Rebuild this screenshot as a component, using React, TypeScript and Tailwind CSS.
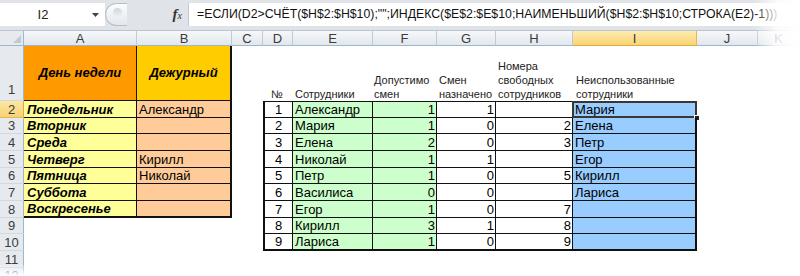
import React from 'react';

const ROW_H = [17, 16, 17, 17, 16, 17, 17, 16, 17, 17, 16]; // rows 2..12

const days = [
  ['Понедельник', 'Александр'],
  ['Вторник', ''],
  ['Среда', ''],
  ['Четверг', 'Кирилл'],
  ['Пятница', 'Николай'],
  ['Суббота', ''],
  ['Воскресенье', ''],
];

const staff = [
  { n: 1, name: 'Александр', max: 1, used: 1, free: '', left: 'Мария' },
  { n: 2, name: 'Мария', max: 1, used: 0, free: '2', left: 'Елена' },
  { n: 3, name: 'Елена', max: 2, used: 0, free: '3', left: 'Петр' },
  { n: 4, name: 'Николай', max: 1, used: 1, free: '', left: 'Егор' },
  { n: 5, name: 'Петр', max: 1, used: 0, free: '5', left: 'Кирилл' },
  { n: 6, name: 'Василиса', max: 0, used: 0, free: '', left: 'Лариса' },
  { n: 7, name: 'Егор', max: 1, used: 0, free: '7', left: '' },
  { n: 8, name: 'Кирилл', max: 3, used: 1, free: '8', left: '' },
  { n: 9, name: 'Лариса', max: 1, used: 0, free: '9', left: '' },
];

const letters = ['A', 'B', 'C', 'D', 'E', 'F', 'G', 'H', 'I', 'J', 'K'];

const formula = '=ЕСЛИ(D2>СЧЁТ($H$2:$H$10);"";ИНДЕКС($E$2:$E$10;НАИМЕНЬШИЙ($H$2:$H$10;СТРОКА(E2)-1)))';

function FormulaBar() {
  return (
    <div className="h-[30px] flex bg-[#e0e4e9] pt-[3px] pb-[4px]">
      <div className="w-[105px] bg-white flex items-center">
        <span className="w-[86px] text-center text-[13px] text-[#222]">I2</span>
        <svg width="7" height="4" viewBox="0 0 7 4" className="ml-[6px]">
          <path d="M0 0 L7 0 L3.5 4 Z" fill="#444" />
        </svg>
      </div>
      <div className="w-[22px] h-[23px] rounded-l-full border border-r-0 border-[#b7bfca] bg-gradient-to-b from-[#fbfcfd] to-[#e4e8ed] flex items-start justify-center pt-[4px] pl-[2px]">
        <div className="w-[9px] h-[9px] rounded-full bg-gradient-to-b from-[#cfd5dc] to-[#eef1f4]" />
      </div>
      <div className="w-[61px] flex items-center justify-end pr-[6px] text-[#333]">
        <span className="font-['Liberation_Serif',serif] italic font-bold text-[15px] leading-none">f</span>
        <span className="font-['Liberation_Serif',serif] italic text-[10px] leading-none mt-[3px]">x</span>
      </div>
      <div className="flex-1 bg-white border-l border-[#c3cad3] flex items-center pl-[8px] text-[12.3px] text-[#111] whitespace-nowrap overflow-hidden">
        {formula}
      </div>
    </div>
  );
}

export default function App() {
  return (
    <div className="relative w-[800px] h-[276px] overflow-hidden bg-white font-['Liberation_Sans',Arial,sans-serif]">
      <FormulaBar />
      <div className="grid grid-cols-[24px_113px_95px_31px_30px_80px_64px_59px_77px_124px_61px_1fr] grid-rows-[15px_55px_17px_16px_17px_17px_16px_17px_17px_16px_17px_17px_16px] border-t border-[#b9c4d0]">
        {/* column headers */}
        <div className="bg-[#e6eaef] border-r border-b border-r-[#9eb6ce] border-b-[#9eb6ce] flex items-end justify-end p-[2px]">
          <svg width="8" height="8" viewBox="0 0 8 8">
            <path d="M8 0 L8 8 L0 8 Z" fill="#c3c9d1" />
          </svg>
        </div>
        {letters.map((l) => (
          <div
            key={l}
            className={`flex items-center justify-center text-[13px] leading-none border-r border-b ${
              l === 'I'
                ? 'bg-gradient-to-b from-[#fdebb0] to-[#f8d572] border-r-[#e9b54c] border-b-[#e2a83a] text-[#3b3b3b]'
                : 'bg-gradient-to-b from-[#f6f8fa] to-[#e2e7ed] border-r-[#c2cad4] border-b-[#9eb6ce] text-[#3b3b3b]'
            }`}
          >
            {l}
          </div>
        ))}

        {/* row 1 */}
        <div className="bg-[#e6eaef] border-r border-b border-r-[#9eb6ce] border-b-[#d0d8e1] flex items-end justify-center text-[13px] text-[#3b3b3b] pb-[1px]">
          1
        </div>
        <div className="bg-[#ff9900] border-r border-b border-[#111] flex items-center justify-center text-[13px] font-bold italic text-black">
          День недели
        </div>
        <div className="bg-[#ffcc00] border-r-2 border-b border-[#111] flex items-center justify-center text-[13px] font-bold italic text-black">
          Дежурный
        </div>
        <div />
        <div className="flex items-end pl-[8px] text-[11px] leading-[14px] text-[#222]">№</div>
        <div className="flex items-end pl-[2px] text-[11px] leading-[14px] text-[#222]">Сотрудники</div>
        <div className="flex items-end pl-[1px] text-[11px] leading-[14px] text-[#222] whitespace-nowrap">
          <span>Допустимо<br />смен</span>
        </div>
        <div className="flex items-end pl-[2px] text-[11px] leading-[14px] text-[#222] whitespace-nowrap">
          <span>Смен<br />назначено</span>
        </div>
        <div className="flex items-end pl-[2px] text-[11px] leading-[14px] text-[#222] whitespace-nowrap">
          <span>Номера<br />свободных<br />сотрудников</span>
        </div>
        <div className="flex items-end pl-[3px] text-[11px] leading-[14px] text-[#222] whitespace-nowrap">
          <span>Неиспользованные<br />сотрудники</span>
        </div>
        <div />
        <div />

        {/* rows 2..12 */}
        {ROW_H.map((_, i) => {
          const r = i + 2;
          const day = days[i];
          const s = staff[i];
          return (
            <React.Fragment key={r}>
              <div
                className={`border-r border-b flex items-center justify-center text-[13px] leading-none text-[#3b3b3b] ${
                  r === 2
                    ? 'bg-gradient-to-b from-[#fde6a4] to-[#f7d274] border-r-[#e2a83a] border-b-[#e9b54c]'
                    : 'bg-[#e6eaef] border-r-[#9eb6ce] border-b-[#d0d8e1]'
                }`}
              >
                {r}
              </div>
              {day ? (
                <div
                  className={`bg-[#ffff99] border-r border-[#111] flex items-center pl-[3px] text-[13px] leading-none font-bold italic text-black ${
                    i === 6 ? 'border-b-2' : 'border-b'
                  }`}
                >
                  {day[0]}
                </div>
              ) : (
                <div />
              )}
              {day ? (
                <div
                  className={`bg-[#ffcc99] border-r-2 border-[#111] flex items-center pl-[2px] text-[13px] leading-none text-black ${
                    i === 6 ? 'border-b-2' : 'border-b'
                  }`}
                >
                  {day[1]}
                </div>
              ) : (
                <div />
              )}
              <div />
              {s ? (
                <>
                  <div
                    className={`bg-white border-l-2 border-r border-[#111] flex items-center justify-center text-[13px] leading-none text-black ${
                      i === 0 ? 'border-t' : ''
                    } ${i === 8 ? 'border-b-2' : 'border-b'}`}
                  >
                    {s.n}
                  </div>
                  <div
                    className={`bg-[#ccffcc] border-r border-[#111] flex items-center pl-[2px] text-[13px] leading-none text-black ${
                      i === 0 ? 'border-t' : ''
                    } ${i === 8 ? 'border-b-2' : 'border-b'}`}
                  >
                    {s.name}
                  </div>
                  <div
                    className={`bg-[#ccffcc] border-r border-[#111] flex items-center justify-end pr-[1px] text-[13px] leading-none text-black ${
                      i === 0 ? 'border-t' : ''
                    } ${i === 8 ? 'border-b-2' : 'border-b'}`}
                  >
                    {s.max}
                  </div>
                  <div
                    className={`bg-white border-r border-[#111] flex items-center justify-end pr-[1px] text-[13px] leading-none text-black ${
                      i === 0 ? 'border-t' : ''
                    } ${i === 8 ? 'border-b-2' : 'border-b'}`}
                  >
                    {s.used}
                  </div>
                  <div
                    className={`bg-white border-r border-[#111] flex items-center justify-end pr-[1px] text-[13px] leading-none text-black ${
                      i === 0 ? 'border-t' : ''
                    } ${i === 8 ? 'border-b-2' : 'border-b'}`}
                  >
                    {s.free}
                  </div>
                  <div
                    className={`relative bg-[#99ccff] border-r-2 border-[#111] flex items-center pl-[2px] text-[13px] leading-none text-black ${
                      i === 0 ? 'border-t' : ''
                    } ${i === 8 ? 'border-b-2' : 'border-b'}`}
                  >
                    {s.left}
                    {i === 0 && (
                      <>
                        <div className="absolute -left-[1px] -top-[1px] -right-[2px] -bottom-[1px] border-2 border-[#3a3631]" />
                        <div className="absolute -right-[5px] -bottom-[4px] w-[6px] h-[6px] bg-[#222] border border-white" />
                      </>
                    )}
                  </div>
                </>
              ) : (
                <>
                  <div />
                  <div />
                  <div />
                  <div />
                  <div />
                  <div />
                </>
              )}
              <div />
              <div />
            </React.Fragment>
          );
        })}
      </div>

      {/* soft fade at the right and bottom edges */}
      <div className="absolute top-0 right-0 h-full w-[46px] bg-gradient-to-r from-white/0 via-white/85 to-white pointer-events-none" />
      <div className="absolute left-0 bottom-0 w-full h-[12px] bg-gradient-to-b from-white/0 to-white pointer-events-none" />
    </div>
  );
}
